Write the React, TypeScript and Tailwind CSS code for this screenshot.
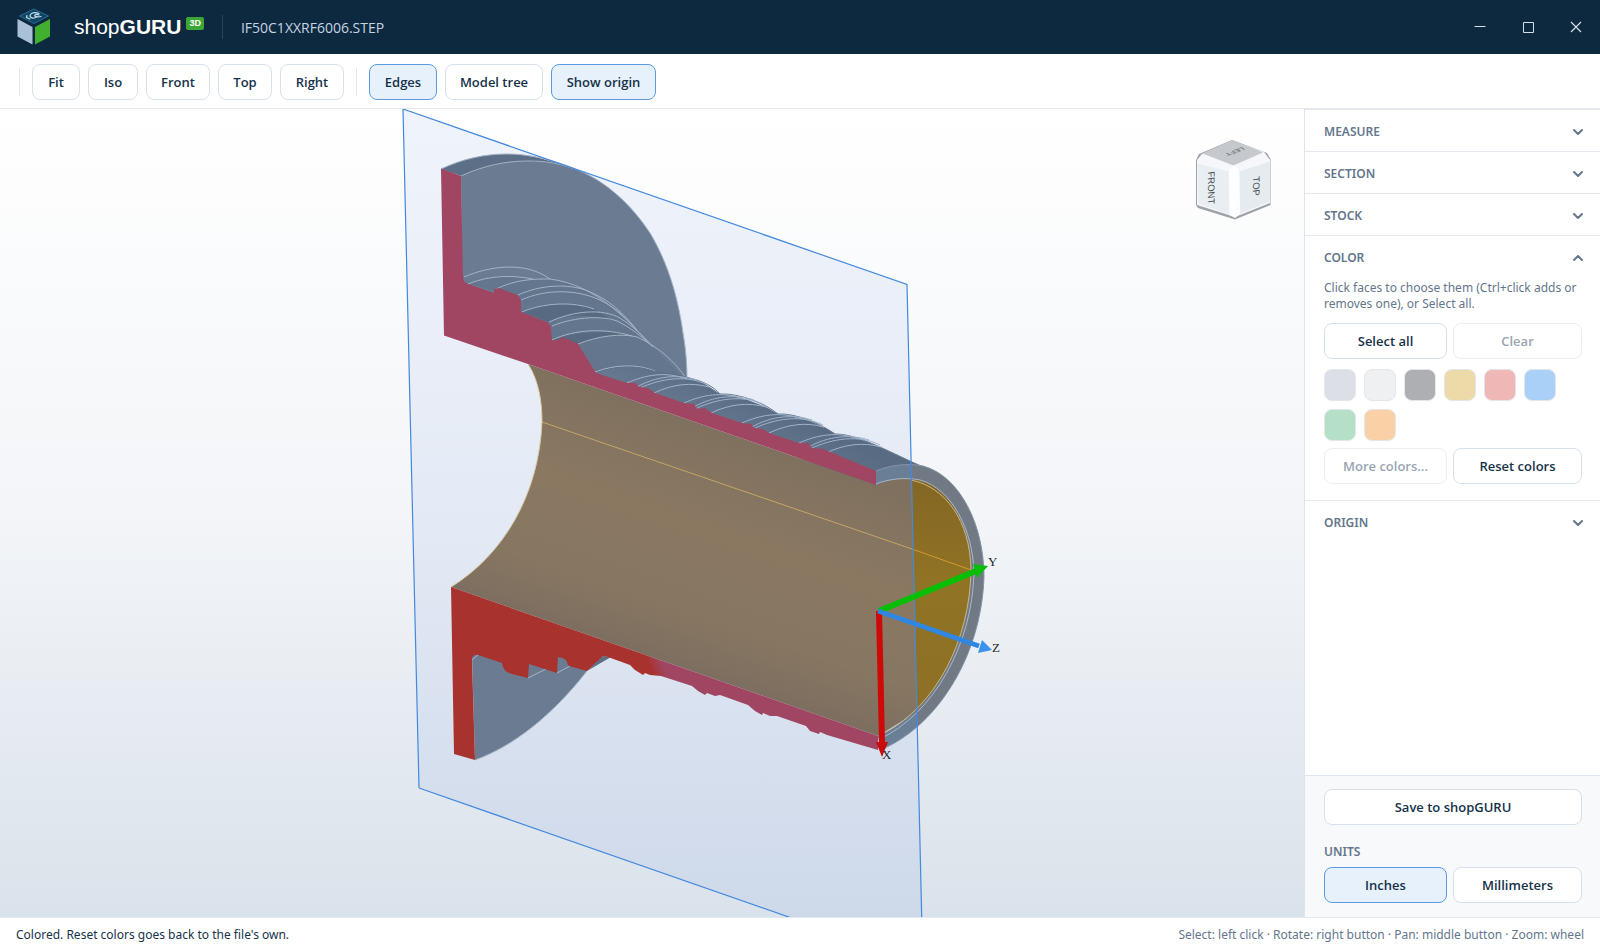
import React, { useState } from 'react';
import { ChevronDown, ChevronUp } from 'lucide-react';

type Unit = 'in' | 'mm';

const swatches = [
  { name: 'Silver', className: 'bg-[#dcdfe5]' },
  { name: 'White', className: 'bg-[#eef0f2]' },
  { name: 'Gray', className: 'bg-[#adafb3]' },
  { name: 'Gold', className: 'bg-[#ecdaa8]' },
  { name: 'Red', className: 'bg-[#f0b7b7]' },
  { name: 'Blue', className: 'bg-[#abd0f8]' },
  { name: 'Green', className: 'bg-[#b6dfc8]' },
  { name: 'Orange', className: 'bg-[#fad0a7]' },
];

// Start of each groove group along the sleeve
const grooves = [
  [627, 383],
  [684, 403],
  [742, 423],
  [799, 443],
];

interface ButtonProps {
  children: React.ReactNode;
  active?: boolean;
  disabled?: boolean;
  className?: string;
  onClick?: () => void;
}

const Button: React.FC<ButtonProps> = ({ children, active, disabled, className = '', onClick }) => {
  let look = 'border-[#d8e0ea] bg-white text-[#16324a]';
  if (active) look = 'border-[#5b9be0] bg-[#e7f1fc] text-[#16324a]';
  if (disabled) look = 'border-[#eaeef3] bg-white text-[#99a5b1]';
  return (
    <button
      type="button"
      disabled={disabled}
      onClick={onClick}
      className={`h-9 rounded-lg border font-['Open_Sans',sans-serif] text-[13px] leading-5 font-semibold whitespace-nowrap ${look} ${className}`}
    >
      {children}
    </button>
  );
};

const SectionHeader: React.FC<{ title: string; open?: boolean }> = ({ title, open }) => (
  <button
    type="button"
    aria-expanded={!!open}
    className="flex h-[42px] w-full items-center justify-between pt-0.5 pr-3.5 pl-[19px] text-xs font-semibold text-[#64768c]"
  >
    {title}
    {open ? <ChevronUp size={16} strokeWidth={3} /> : <ChevronDown size={16} strokeWidth={3} />}
  </button>
);

const Logo = () => (
  <svg className="h-[38px] w-[34px]" viewBox="0 0 34 38" aria-hidden="true">
    <path d="M17 0.5 32 8 17 16 2 8Z" fill="#0f4668" />
    <path d="M17 1 31.5 8 17 15.5 2.5 8Z" fill="none" stroke="#2c7398" strokeWidth="0.8" />
    <path
      d="M22 5.500C19 4 15 4.500 13.500 6.500C12 9 15 11 18.500 9.500L20 8.500M24 8.500C20 9.500 16.500 8.500 18 7C19 6 21 6.500 22 7M10 7.500 9.500 9.500 13 11"
      fill="none"
      stroke="#c8dbe8"
      strokeWidth="1.200"
      strokeLinecap="round"
    />
    <path d="M0.500 11 15.500 19V36.500L0.500 28.500Z" fill="#a9c1d8" />
    <path d="M18 19 33 11V28.500L18 36.500Z" fill="#41b02e" />
  </svg>
);

const ViewCube = () => (
  <g strokeLinejoin="round">
    <path d="M1199 154 1232 140 1267 153 1270.500 159V205L1235 219.500 1198 208 1196 205V160Z" fill="#9ea3a9" />
    <path d="M1202 154 1232 141 1264 152 1270 160V203L1235 217 1197 205V160Z" fill="#f5f7fb" />
    <path d="M1202.500 153.500 1232.500 140 1263 152.500 1233.500 165.500Z" fill="#c5c8cc" />
    <path d="M1197.500 163.500 1228.500 171.500 1229.500 214.500 1198.500 203.500Z" fill="#e9eef3" />
    <path d="M1239.500 171.500 1270 161.500V201.500L1240 213.500Z" fill="#e6ebf0" />
    <path d="M1229 170 1234 165 1239 170 1240 214 1235 218 1229.500 215Z" fill="#fdfeff" />
    <g fill="#4a4e52" fontFamily="'Liberation Sans', sans-serif" fontSize="9.500">
      <text transform="matrix(0 1 -1 .15 1208 172)">FRONT</text>
      <text transform="matrix(0 1 -1 .15 1253 177)">TOP</text>
      <text transform="matrix(-.9 .35 -.6 -.4 1242 147)" fontSize="8">LEFT</text>
    </g>
  </g>
);

// The sectioned part, its cutting plane and the origin axes
const Model = () => (
  <svg
    className="absolute inset-0 h-full w-full"
    viewBox="0 109 1304 808"
    preserveAspectRatio="xMidYMid slice"
    role="img"
    aria-label="Sectioned 3D model"
  >
    <defs>
      <linearGradient id="plane" x1="0" y1="0" x2="0" y2="1">
        <stop offset="0" stopColor="#3c6ed8" stopOpacity="0.08" />
        <stop offset="1" stopColor="#3c6ed8" stopOpacity="0.08" />
      </linearGradient>
      <linearGradient id="bore" gradientUnits="userSpaceOnUse" x1="730" y1="430" x2="650" y2="665">
        <stop offset="0" stopColor="#7f705f" />
        <stop offset="0.4" stopColor="#8a7861" />
        <stop offset="0.75" stopColor="#877661" />
        <stop offset="1" stopColor="#7b6d60" />
      </linearGradient>
      <linearGradient id="gold" x1="0" y1="0" x2="0" y2="1">
        <stop offset="0" stopColor="#836623" />
        <stop offset="0.4" stopColor="#917325" />
        <stop offset="1" stopColor="#8c7026" />
      </linearGradient>
      <linearGradient id="sleeve" gradientUnits="userSpaceOnUse" x1="740" y1="440" x2="760" y2="400">
        <stop offset="0" stopColor="#66788f" />
        <stop offset="1" stopColor="#596b82" />
      </linearGradient>
      <linearGradient id="cut" gradientUnits="userSpaceOnUse" x1="652" y1="672" x2="664" y2="667">
        <stop offset="0" stopColor="#a8322d" />
        <stop offset="1" stopColor="#a04662" />
      </linearGradient>
      <clipPath id="front">
        <path d="M907 284 922 917H1100V284Z" />
      </clipPath>
    </defs>

    <path d="M403 109 907 284.500 922 930 826 930 419 788Z" fill="url(#plane)" />

    {/* flange */}
    <path d="M441 169C462 159 485 154 506 154S545 158 580 171L560 190 461 176Z" fill="#5d6f87" />
    <path d="M461 176C485 165 507 161 528 161C550 161 567 165 580 171C606 182 631 204 650 233C665 258 677 290 683 333C686 350 687 365 687 379L660 400 560 360 462 290Z" fill="#6a7b92" />
    <path d="M441 169C462 159 485 154 506 154S550 158 580 171C606 182 631 204 650 233C665 258 677 290 683 333C686 350 687 365 687 379M461 176C485 165 507 161 528 161S560 164 575 169" fill="none" stroke="#a3b1c3" />
    <path d="M472 654 610 657C600 660 592 665 587 671C552 716 512 747 475 760Z" fill="#6a7b92" />
    <path d="M472 660 478 655M528 678 546 669M557 673 570 666M610 657C600 660 592 665 587 671C552 716 512 747 475 760" fill="none" stroke="#a6b4c6" />
    <path d="M587 671 603 656 611 657Z" fill="#5d6f87" />

    {/* hub steps */}
    <path d="M468 284C490 274 515 274 533 279L525 298Z M494 290C520 279 535 279 550 279C600 284 630 320 653 347L684 378 660 395 595 374 520 312Z" fill="#64768d" />
    <path d="M522 312C544 304 578 300 594 309L612 320C590 315 568 313 549 322Z M552 340C580 330 615 330 635 337C610 334 592 338 578 344Z M595 372C617 365 638 365 655 371L680 378C660 374 645 376 628 383Z" fill="#586a81" />
    <g fill="none" stroke="#a3b3c7">
      <path d="M464 277C487 267 524 260 550 279M468 284C490 275 512 275 533 279" />
      <path d="M494 290C516 279 533 279 550 279C598 285 630 323 653 347" />
      <path d="M518 295C540 285 568 283 588 291C610 300 623 313 637 330M521 300C546 289 576 289 600 300C620 310 627 320 637 330" />
      <path d="M522 312C543 303 572 301 594 309M549 322C573 311 602 308 620 318C633 326 643 336 653 347" />
      <path d="M552 326C577 316 604 316 617 321C631 328 640 335 653 347M552 340C575 329 605 328 632 336" />
      <path d="M578 344C598 336 621 333 637 337C659 347 675 362 686 378M595 372C616 364 638 364 655 371" />
    </g>

    {/* sleeve */}
    <path d="M595 373C616 365 638 365 655 371C670 373 695 376 708 386L720 394C735 394 765 405 778 414C790 413 820 423 835 434C848 433 873 443 912 462L946 478 876 490Z" fill="url(#sleeve)" />
    <path d="M687 378C702 380 714 387 720 394C740 393 766 404 778 414C795 413 820 423 835 434C855 434 878 446 912 462L935 472" fill="none" stroke="#68798d" />
    {grooves.map(([x, y]) => (
      <g key={x} transform={`translate(${x} ${y})`} fill="none" stroke="#a0b2c9">
        <path d="M0 0C18-8 38-12 60-4M10 4C29-7 51-9 70-3M13 5C33-4 59-9 81 2M27 10C46 1 64-1 82 4" />
      </g>
    ))}

    {/* bore */}
    <path d="M528 364C539 381 542 402 542 422C539 495 503 555 451 587L878 736 917 712C950 684 971 625 971 570C970 519 946 487 920 480C905 477 888 479 876 485Z" fill="url(#bore)" />
    <path d="M528 364C539 381 542 402 542 422C539 495 503 555 451 587" fill="none" stroke="#d8cba6" />
    <g clipPath="url(#front)">
      <path d="M878 736C936 711 971 640 971 570C970 519 946 487 920 480C905 477 888 479 876 485Z" fill="url(#gold)" />
    </g>
    <path d="M542 422 912 549" stroke="#c3a766" />
    <path d="M912 549 971 570" stroke="#d09c2d" />

    {/* end ring */}
    <path
      d="M876 471C891 465 906 463 923 466C960 476 984 525 984 577C981 661 933 729 880 750L878 736C936 711 971 640 971 570C970 519 946 487 920 480C905 477 888 479 876 485Z"
      fill="#6a7e95"
    />
    <g clipPath="url(#front)">
      <path
        d="M876 471C891 465 906 463 923 466C960 476 984 525 984 577C981 661 933 729 880 750L878 736C936 711 971 640 971 570C970 519 946 487 920 480C905 477 888 479 876 485Z"
        fill="#717a84"
      />
    </g>
    <path d="M876 471C891 465 906 463 923 466C960 476 984 525 984 577C981 661 933 729 880 750" fill="none" stroke="#8795a8" />
    <path d="M876 484C888 479 905 477 920 480C952 489 973 530 974 573C972 645 934 713 880 739" fill="none" stroke="#a8b7ca" />
    <path d="M911 480C945 487 970 520 971 570C970 640 936 706 884 733" fill="none" stroke="#c9b586" />

    {/* cut faces */}
    <path
      d="M441 168.500 461 176 463 277Q463 282 468 284L494 293V289L499 288 517 295Q521 298 521 302V312L547 322Q551 325 551 328L552 340 558 340 563 337 578 344 596 373 627 383 636 383 639 387 648 388 655 393 684 403 694 404 697 409 705 408 712 413 742 423 751 424 754 428 763 429 769 433 799 443 808 443 812 448 823 449 876 471V485L528 364 444 335.500Z"
      fill="#a04662"
    />
    <path
      d="M451 587 878 736V750L827 735 820 732 819 734 810 731 806 726 777 716 770 716 763 713 762 715 755 711 748 705 720 695 715 696 707 693 705 695 698 691 692 686 661 676 650 675 645 673 643 675 635 670 630 665 608 657 603 656 587 671 569 666C566 663 569 659 558 657L557 673 529 664 528 678 512 674Q503 672 502 663L478 655Q472 654 472 660L475 760 454 754Z"
      fill="url(#cut)"
    />

    <path d="M419 788 403 109 907 284.500 922 930M419 788 826 930" fill="none" stroke="#4389de" strokeWidth="1.200" />

    {/* origin axes */}
    <path d="M879 611 882 742" stroke="#cf0808" strokeWidth="6" />
    <path d="M876 742H888L882 757Z" fill="#c90b0b" />
    <path d="M879 611 976 571" stroke="#08bf08" strokeWidth="6" />
    <path d="M973 564 988 566 977 578Z" fill="#0abd0a" />
    <path d="M878 611 979 646" stroke="#2f87e2" strokeWidth="5" />
    <path d="M982 640 992 650 978 653Z" fill="#3a91ee" />
    <g fill="#25292e" fontFamily="'Liberation Serif', serif" fontSize="13">
      <text x="988" y="566">Y</text>
      <text x="992" y="652">Z</text>
      <text x="882" y="759">X</text>
    </g>

    <ViewCube />
  </svg>
);

const App: React.FC = () => {
  const [units, setUnits] = useState<Unit>('in');
  const [edges, setEdges] = useState(true);
  const [tree, setTree] = useState(false);
  const [origin, setOrigin] = useState(true);

  return (
    <div className="flex h-screen flex-col bg-white font-['Noto_Sans',sans-serif] text-[#16324a]">
      <header className="flex h-[54px] shrink-0 items-center bg-[#0d2940] pl-[17px]">
        <Logo />
        <div className="ml-[23px] flex items-start font-['Liberation_Sans',sans-serif] text-white">
          <span className="text-[21px] leading-7">
            shop<b>GURU</b>
          </span>
          <span className="mt-1 ml-[5px] flex h-[13px] items-center rounded-xs bg-[#3fa535] px-[3px] text-[9px] font-bold">3D</span>
        </div>
        <div className="mx-[18px] h-6 w-px bg-[#2a4359]" />
        <span className="pt-0.5 font-['Open_Sans',sans-serif] text-sm text-[#c5d4e2]">IF50C1XXRF6006.STEP</span>
        <div className="ml-auto flex h-full text-[#d3dfe9]">
          <button type="button" aria-label="Minimize" className="flex w-12 items-center justify-center">
            <svg width="12" height="12" viewBox="0 0 12 12" stroke="currentColor"><path d="M0.500 5.500H11.500" /></svg>
          </button>
          <button type="button" aria-label="Maximize" className="flex w-12 items-center justify-center">
            <svg width="12" height="12" viewBox="0 0 12 12" fill="none" stroke="currentColor"><path d="M1.500 1.500H11.500V11.500H1.500Z" /></svg>
          </button>
          <button type="button" aria-label="Close" className="flex w-12 items-center justify-center">
            <svg width="12" height="12" viewBox="0 0 12 12" stroke="currentColor" strokeWidth="1.200"><path d="M1 1 11 11M11 1 1 11" /></svg>
          </button>
        </div>
      </header>

      <nav className="flex h-[55px] shrink-0 items-center gap-2 border-b border-[#e4e9f0] pt-px pl-[19px]">
        <div className="mr-1 h-7 w-px bg-[#e1e7ee]" />
        <Button className="w-12">Fit</Button>
        <Button className="w-[50px]">Iso</Button>
        <Button className="w-16">Front</Button>
        <Button className="w-[54px]">Top</Button>
        <Button className="w-16">Right</Button>
        <div className="mx-1 h-7 w-px bg-[#e1e7ee]" />
        <Button className="w-[68px]" active={edges} onClick={() => setEdges(!edges)}>Edges</Button>
        <Button className="w-[98px]" active={tree} onClick={() => setTree(!tree)}>Model tree</Button>
        <Button className="w-[105px]" active={origin} onClick={() => setOrigin(!origin)}>Show origin</Button>
      </nav>

      <div className="flex min-h-0 flex-1">
        <main className="relative min-w-0 flex-1 overflow-hidden bg-linear-to-b from-white via-[#f3f5f8] to-[#dae2eb]">
          <Model />
        </main>

        <aside className="flex w-[296px] shrink-0 flex-col border-l border-[#dfe5ed]">
          <div className="divide-y divide-[#e4e9f0] border-t border-[#e4e9f0]">
            <SectionHeader title="MEASURE" />
            <SectionHeader title="SECTION" />
            <SectionHeader title="STOCK" />
            <section>
              <SectionHeader title="COLOR" open />
              <div className="pt-0.5 pr-[18px] pb-4 pl-[19px]">
                <p className="text-xs leading-4 whitespace-nowrap text-[#64768c]">
                  Click faces to choose them (Ctrl+click adds or
                  <br />
                  removes one), or Select all.
                </p>
                <div className="mt-[11px] grid grid-cols-[123px_1fr] gap-1.5">
                  <Button>Select all</Button>
                  <Button disabled>Clear</Button>
                </div>
                <div className="flex flex-wrap gap-2 pt-2.5 pb-[7px]">
                  {swatches.map((swatch) => (
                    <button
                      key={swatch.name}
                      type="button"
                      disabled
                      aria-label={swatch.name}
                      className={`size-8 rounded-lg border border-[#e3e7ec] ${swatch.className}`}
                    />
                  ))}
                </div>
                <div className="grid grid-cols-[123px_1fr] gap-1.5">
                  <Button disabled>More colors...</Button>
                  <Button>Reset colors</Button>
                </div>
              </div>
            </section>
            <SectionHeader title="ORIGIN" />
          </div>

          <div className="mt-auto border-t border-[#e0e6ed] bg-[#f7f9fb] pt-[13px] pr-[18px] pb-3.5 pl-[19px]">
            <Button className="w-full">Save to shopGURU</Button>
            <h2 className="mt-[18px] mb-1.5 text-xs leading-[18px] font-semibold text-[#64768c]">UNITS</h2>
            <div className="grid grid-cols-[123px_1fr] gap-1.5">
              <Button active={units === 'in'} onClick={() => setUnits('in')}>Inches</Button>
              <Button active={units === 'mm'} onClick={() => setUnits('mm')}>Millimeters</Button>
            </div>
          </div>
        </aside>
      </div>

      <footer className="flex h-[33px] shrink-0 items-center justify-between border-t border-[#e4e9f0] px-4 pt-0.5 text-xs">
        <span>Colored. Reset colors goes back to the file's own.</span>
        <span className="text-[#64768c]">Select: left click · Rotate: right button · Pan: middle button · Zoom: wheel</span>
      </footer>
    </div>
  );
};

export default App;
